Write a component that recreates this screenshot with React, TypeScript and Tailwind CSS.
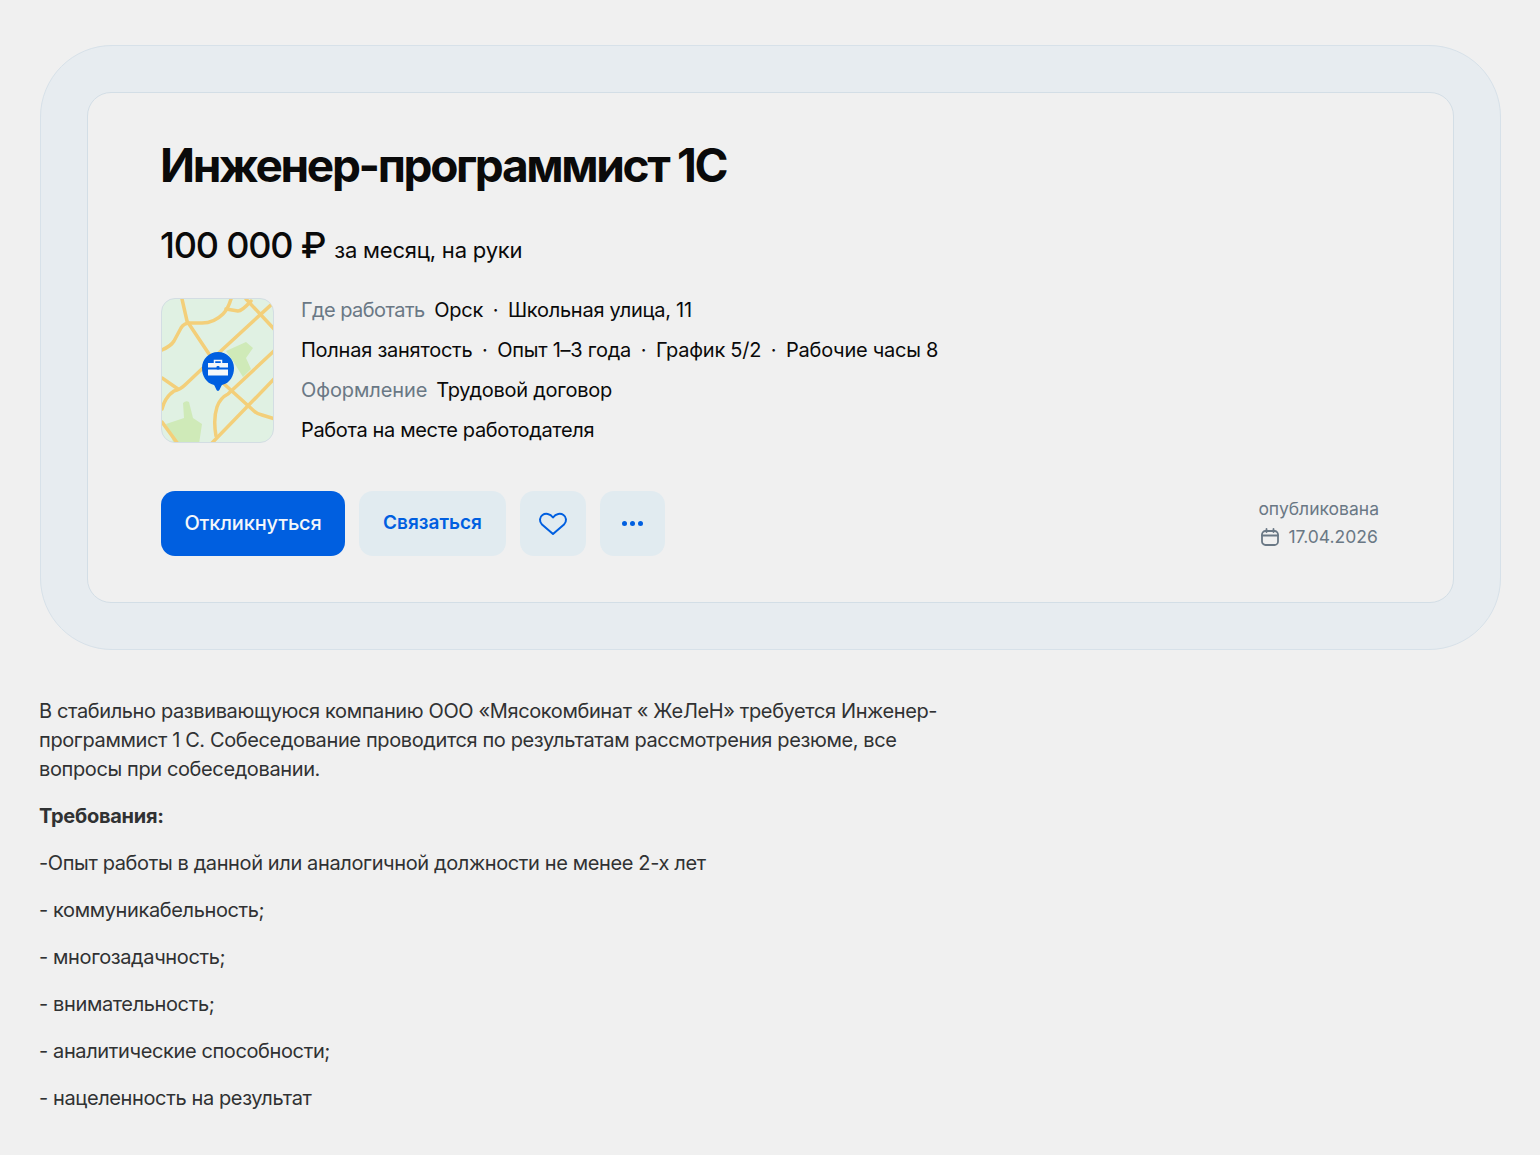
import React from "react";

const font = { fontFamily: "Inter, sans-serif" };

const Dot = () => <span className="mx-[9.700px]">·</span>;

const MapPreview = () => (
  <div className="w-[113px] h-[145px] shrink-0 rounded-[14px] border border-[#d3dde3] overflow-hidden bg-[#e0f1e3]">
    <svg width="113" height="145" viewBox="0 0 113 145" fill="none">
      <path d="M64 52L84 43L91 49L84 59L89 70L81 78L71 62Z" fill="#cfeab8" />
      <path d="M4 125L22 119L21 104Q24 101 27 103L31 119L40 125L37 145H12Z" fill="#cfeab8" />
      <g stroke="#f3cf7a" strokeWidth="3.500" strokeLinecap="round" strokeLinejoin="round">
        <path d="M20 0L25 22L47 55" />
        <path d="M0 51Q9 47 12 42L19 29Q22 24 28 24H40Q52 24 61 15Q66 10 69 0" />
        <path d="M64 10L76 12Q80 12 89 2" />
        <path d="M84 0L113 31" />
        <path d="M111 4L61 50L24 85Q18 91 12 92Q3 98 0 110" />
        <path d="M0 79L16 90" />
        <path d="M61 84L92 112Q95 115 100 116L113 120" />
        <path d="M113 51L66 95Q58 99 55 108Q51 120 54 137" />
        <path d="M113 79L49 145" />
        <path d="M0 123L16 145" />
      </g>
      <path d="M56 92C54.5 92 54 89 52 86C44 84 40 77 40 69C40 60 47 53 56 53C65 53 72 60 72 69C72 77 68 84 60 86C58 89 57.500 92 56 92Z" fill="#005fe0" />
      <path d="M46 64H66V68.500H46Z" fill="#f4f7fa" />
      <path d="M46 70.500H66V76.500H46Z" fill="#f4f7fa" />
      <path d="M52.500 64V61.500H59.500V64" stroke="#f4f7fa" strokeWidth="1.500" />
      <rect x="54.500" y="67" width="3" height="3.500" rx="1" fill="#005fe0" />
    </svg>
  </div>
);

const App = () => {
  return (
    <div className="min-h-[1155px] bg-[#f0f0f0] pt-[45px] pl-[40px] pr-[39px] text-[#303233]" style={font}>
      <section className="h-[605px] rounded-[72px] border border-[#d7e1e9] bg-[#e7ecf0] p-[46px]">
        <div className="h-[511px] rounded-[24px] border border-[#d3dee6] bg-[#f0f0f0] pl-[73px] pr-[74px] pt-[44px] text-[#0a0a0a]">
          <h1 className="text-[46px] leading-[56px] font-bold tracking-[-2.350px] -ml-px">Инженер-программист 1С</h1>
          <div className="mt-[28px] flex items-baseline h-[48px]">
            <span className="text-[36px] leading-[48px] font-medium tracking-[-1.200px] -ml-px">100 000 ₽</span>
            <span className="ml-[9px] text-[22px] leading-[28px] tracking-[-0.2px]">за месяц, на руки</span>
          </div>
          <div className="mt-[29px] flex">
            <MapPreview />
            <div className="ml-[27px] text-[20px] leading-[28px] tracking-[-0.25px]">
              <p className="h-[40px] -mt-[2px]">
                <span className="text-[#6a7885] mr-[9.500px] tracking-[-0.55px]">Где работать</span>Орск<Dot />Школьная улица, 11
              </p>
              <p className="h-[40px]">
                Полная занятость<Dot />Опыт 1–3 года<Dot />График 5/2<Dot />Рабочие часы 8
              </p>
              <p className="h-[40px]">
                <span className="text-[#6a7885] mr-[9px] tracking-[-0.1px]">Оформление</span>Трудовой договор
              </p>
              <p className="tracking-[-0.35px]">Работа на месте работодателя</p>
            </div>
          </div>
          <div className="mt-[47px] flex items-center">
            <button type="button" className="h-[65px] w-[184px] rounded-[14px] bg-[#005fe0] pb-px text-[#f4f7fa] text-[20px] font-medium tracking-[-0.15px]">
              Откликнуться
            </button>
            <button type="button" className="ml-[14px] h-[65px] w-[147px] rounded-[14px] bg-[#e1ebf0] text-[#005fe0] text-[19px] font-semibold">
              Связаться
            </button>
            <button type="button" className="ml-[14px] flex h-[65px] w-[66px] items-center justify-center rounded-[14px] bg-[#e1ebf0]">
              <svg width="30" height="24" viewBox="0 0 30 24" fill="none">
                <path d="M15 22L4 12.500C1 9.500 1.500 5 4.500 3C7.500 1 12 1.500 15 5.500C18 1.500 22.500 1 25.500 3C28.500 5 29 9.500 26 12.500Z" stroke="#005fe0" strokeWidth="2" strokeLinejoin="round" />
              </svg>
            </button>
            <button type="button" className="ml-[14px] flex h-[65px] w-[65px] items-center justify-center gap-[3px] rounded-[14px] bg-[#e1ebf0]">
              <span className="size-[5px] rounded-full bg-[#005fe0]" />
              <span className="size-[5px] rounded-full bg-[#005fe0]" />
              <span className="size-[5px] rounded-full bg-[#005fe0]" />
            </button>
            <div className="ml-auto -mt-[2px] text-[17.500px] leading-[28px] text-[#6a7885]">
              <div>опубликована</div>
              <div className="flex items-center gap-[8px] pl-[2px]">
                <svg width="20" height="20" viewBox="0 0 20 20" fill="none" stroke="#6a7885" strokeWidth="1.800">
                  <rect x="2" y="4" width="16" height="14" rx="3.500" />
                  <path d="M2 8.500H18M6.500 2V5M13.500 2V5" strokeLinecap="round" />
                </svg>
                <span>17.04.2026</span>
              </div>
            </div>
          </div>
        </div>
      </section>
      <div className="mt-[47px] -ml-[1px] w-[920px] text-[20px] leading-[29px] tracking-[-0.38px]">
        <p>
          В стабильно развивающуюся компанию ООО «Мясокомбинат « ЖеЛеН» требуется Инженер-программист 1 С. Собеседование проводится по результатам рассмотрения резюме, все вопросы при собеседовании.
        </p>
        <p className="mt-[18px] font-bold tracking-[-0.25px]">Требования:</p>
        <p className="mt-[18px]">-Опыт работы в данной или аналогичной должности не менее 2-х лет</p>
        <p className="mt-[18px]">- коммуникабельность;</p>
        <p className="mt-[18px]">- многозадачность;</p>
        <p className="mt-[18px]">- внимательность;</p>
        <p className="mt-[18px]">- аналитические способности;</p>
        <p className="mt-[18px]">- нацеленность на результат</p>
      </div>
    </div>
  );
};

export default App;
